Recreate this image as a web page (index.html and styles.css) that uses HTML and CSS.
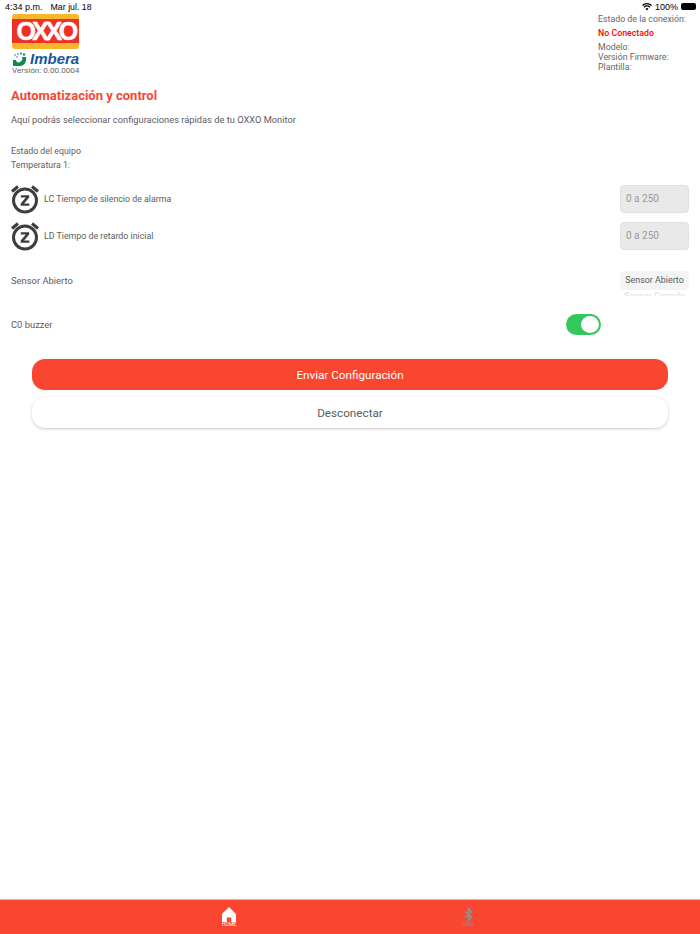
FILE: index.html
```html
<!DOCTYPE html>
<html lang="es">
<head>
    <meta charset="UTF-8">
    <meta name="viewport" content="width=device-width, initial-scale=1.0">
    <title>Automatización y control</title>
    <link rel="stylesheet" href="styles.css">
</head>
<body>
    <div id="app">
        <div class="status-bar">
            <div class="status-time"><span>4:34 p.m.</span><span>Mar jul. 18</span></div>
            <div class="status-right">
                <svg class="wifi" viewBox="0 0 16 12" width="10" height="8">
                    <path d="M8 11.5 5.6 8.8a3.4 3.4 0 0 1 4.8 0zM3.9 7.1l-1.5-1.6a8 8 0 0 1 11.2 0l-1.5 1.6a5.8 5.8 0 0 0-8.2 0zM1.4 4.4 0 2.9a11.4 11.4 0 0 1 16 0l-1.4 1.5a9.4 9.4 0 0 0-13.2 0z" fill="#000"/>
                </svg>
                <span>100%</span>
                <span class="battery"></span>
            </div>
        </div>

        <div class="header">
            <div class="brand">
                <div class="oxxo-logo">
                    <div class="oxxo-red"><span>OXXO</span></div>
                </div>
                <div class="imbera-logo">
                    <svg viewBox="0 0 16 14" width="16" height="14">
                        <path d="M1 8h3c0 2 2 3 4 2s3-3 2-5h4c1 5-2 9-6 9H1z" fill="#0f8a4b"/>
                        <circle cx="3" cy="3" r="1.1" fill="#6fb7dc"/>
                        <circle cx="6" cy="2" r="1.1" fill="#6fb7dc"/>
                        <circle cx="9" cy="1.5" r="1.1" fill="#2a7fb8"/>
                        <circle cx="12" cy="2.5" r="1.2" fill="#2a7fb8"/>
                        <circle cx="5" cy="5" r="1" fill="#6fb7dc"/>
                    </svg>
                    <span>Imbera</span>
                </div>
                <div class="version">Versión: 0.00.0004</div>
            </div>
            <div class="connection">
                <div class="connection-title">Estado de la conexión:</div>
                <div class="connection-state">No Conectado</div>
                <div>Modelo:</div>
                <div>Versión Firmware:</div>
                <div>Plantilla:</div>
            </div>
        </div>

        <div class="content">
            <h1 class="title">Automatización y control</h1>
            <p class="subtitle">Aquí podrás seleccionar configuraciones rápidas de tu OXXO Monitor</p>

            <div class="equipment">
                <div>Estado del equipo</div>
                <div>Temperatura 1:</div>
            </div>

            <div class="param-row first">
                <svg class="alarm" viewBox="0 0 28 30" width="28" height="30">
                    <circle cx="14" cy="16.5" r="11.5" fill="none" stroke="#3d3d3d" stroke-width="3"/>
                    <path d="M1 7.5 7 2.5M27 7.5 21 2.5" stroke="#3d3d3d" stroke-width="3" fill="none"/>
                    <path d="M9.8 11.2h8.4v2.2l-5.1 6h5.2v2.4H9.7v-2.2l5.1-6H9.8z" fill="#3d3d3d"/>
                </svg>
                <span class="param-label">LC Tiempo de silencio de alarma</span>
                <div class="num-input">0 a 250</div>
            </div>
            <div class="param-row">
                <svg class="alarm" viewBox="0 0 28 30" width="28" height="30">
                    <circle cx="14" cy="16.5" r="11.5" fill="none" stroke="#3d3d3d" stroke-width="3"/>
                    <path d="M1 7.5 7 2.5M27 7.5 21 2.5" stroke="#3d3d3d" stroke-width="3" fill="none"/>
                    <path d="M9.8 11.2h8.4v2.2l-5.1 6h5.2v2.4H9.7v-2.2l5.1-6H9.8z" fill="#3d3d3d"/>
                </svg>
                <span class="param-label">LD Tiempo de retardo inicial</span>
                <div class="num-input">0 a 250</div>
            </div>

            <div class="sensor-row">
                <span>Sensor Abierto</span>
                <div class="picker">
                    <div class="picker-selected">Sensor Abierto</div>
                    <div class="picker-next">Sensor Cerrado</div>
                </div>
            </div>

            <div class="buzzer-row">
                <span>C0 buzzer</span>
                <div class="switch"><div class="knob"></div></div>
            </div>

            <div class="actions">
                <div class="btn btn-send">Enviar Configuración</div>
                <div class="btn btn-off">Desconectar</div>
            </div>
        </div>

        <div class="tabbar">
            <div class="tab tab-active">
                <svg viewBox="0 0 14 15" width="14" height="15">
                    <path d="M7 0 14 7v8H9.2v-4.6H4.8V15H0V7z" fill="#fff"/>
                </svg>
                <span>HOME</span>
            </div>
            <div class="tab">
                <svg viewBox="0 0 10 16" width="9" height="15">
                    <path d="M1 4.5 8.5 11 5 14.5v-13L8.5 5 1 11.5" fill="none" stroke="#94908e" stroke-width="1.6"/>
                </svg>
                <span>CMD</span>
            </div>
        </div>
    </div>
</body>
</html>
```

FILE: styles.css
```css
* {
    box-sizing: border-box;
}

html, body {
    margin: 0;
    padding: 0;
    height: 100%;
}

body {
    font-family: 'Roboto', 'Liberation Sans', sans-serif;
    background-color: #fff;
    color: #5c5c5c;
    font-size: 8.8px;
}

#app {
    height: 934px;
    display: flex;
    flex-direction: column;
    overflow: hidden;
}

.status-bar {
    height: 13px;
    flex: none;
    padding: 0 0 0 5px;
    display: flex;
    justify-content: space-between;
    align-items: center;
    color: #000;
    font-family: 'Liberation Sans', sans-serif;
    font-size: 9px;
}

.status-time span + span {
    margin-left: 8px;
    font-size: 8.8px;
}

.status-right {
    display: flex;
    align-items: center;
    gap: 3px;
    padding-right: 4px;
}

.battery {
    display: block;
    width: 15px;
    height: 7px;
    background-color: #000;
    border-radius: 2px;
    box-shadow: 1px 0 0 -2px #000;
}

.header {
    flex: none;
    display: flex;
    justify-content: space-between;
    height: 62px;
    padding: 1px 0 0 12px;
}

.oxxo-logo {
    width: 67px;
    height: 35px;
    background-color: #f8b62d;
    border-radius: 3px;
    padding: 5px 0;
}

.oxxo-red {
    height: 24px;
    background-color: #ee3124;
    display: flex;
    align-items: center;
    justify-content: center;
    color: #fff;
    font-family: 'Liberation Sans', sans-serif;
    font-weight: bold;
    font-size: 25px;
    letter-spacing: -3.5px;
    line-height: 24px;
    -webkit-text-stroke: 0.5px #fff;
}

.imbera-logo {
    display: flex;
    align-items: center;
    height: 14px;
    margin-top: 3px;
    gap: 2px;
}

.imbera-logo span {
    font-family: 'Liberation Sans', sans-serif;
    font-weight: bold;
    font-style: italic;
    font-size: 15px;
    line-height: 14px;
    color: #14589c;
}

.version {
    font-size: 8.1px;
    line-height: 9px;
    color: #666;
}

.connection {
    width: 102px;
    line-height: 10px;
    color: #666;
}

.connection-title {
    margin-bottom: 4px;
}

.connection-state {
    color: #f00;
    font-weight: 500;
    margin-bottom: 4px;
}

.content {
    flex: 1;
    padding: 0 11px;
}

.title {
    margin: 13px 0 0;
    font-size: 13px;
    line-height: 16px;
    font-weight: 700;
    color: #f84631;
}

.subtitle {
    margin: 10px 0 0;
    font-size: 9.3px;
    line-height: 12px;
}

.equipment {
    margin-top: 18px;
    line-height: 14px;
}

.param-row {
    display: flex;
    align-items: center;
    height: 30px;
    margin-top: 7px;
}

.param-row.first {
    margin-top: 12px;
}

.param-label {
    margin-left: 5px;
    flex: 1;
}

.alarm {
    flex: none;
}

.num-input {
    width: 69px;
    height: 28px;
    background-color: #e9e9e9;
    border: 1px solid #e0e0e0;
    border-radius: 4px;
    padding-left: 5px;
    font-size: 10px;
    line-height: 26px;
    color: #999;
}

.sensor-row {
    display: flex;
    justify-content: space-between;
    align-items: flex-start;
    margin-top: 20px;
    font-size: 9.4px;
}

.sensor-row > span {
    line-height: 19px;
}

.picker {
    width: 69px;
    height: 25px;
    overflow: hidden;
    text-align: center;
    font-size: 8.9px;
}

.picker-selected {
    height: 19px;
    line-height: 19px;
    background-color: #f4f4f4;
    border-radius: 5px;
}

.picker-next {
    color: #ddd;
    line-height: 10px;
    margin-top: 1px;
    white-space: nowrap;
}

.buzzer-row {
    display: flex;
    align-items: center;
    height: 22px;
    margin-top: 17px;
    font-size: 9.4px;
}

.buzzer-row span {
    flex: 1;
}

.switch {
    width: 35px;
    height: 21px;
    margin-right: 88px;
    background-color: #34c759;
    border-radius: 11px;
    padding: 2px 1px 2px 15px;
}

.knob {
    width: 18px;
    height: 17px;
    background-color: #fff;
    border-radius: 50%;
}

.actions {
    margin: 24px 21px 0;
    display: flex;
    flex-direction: column;
    gap: 7px;
}

.btn {
    height: 31px;
    line-height: 32px;
    text-align: center;
    font-size: 11.7px;
    border-radius: 13px;
}

.btn-send {
    background-color: #f84631;
    color: #fff;
}

.btn-off {
    background-color: #fff;
    color: #5c5c5c;
    box-shadow: 0 1px 3px rgba(0, 0, 0, 0.22);
}

.tabbar {
    flex: none;
    height: 35px;
    background-color: #f84631;
    display: flex;
    justify-content: center;
    gap: 199px;
    padding: 7px 3px 0 0;
    border-top: 1px solid #fbb0a6;
}

.tab {
    width: 40px;
    display: flex;
    flex-direction: column;
    align-items: center;
    color: #94908e;
    font-size: 5px;
    line-height: 5px;
}

.tab-active {
    color: #fff;
}
```
